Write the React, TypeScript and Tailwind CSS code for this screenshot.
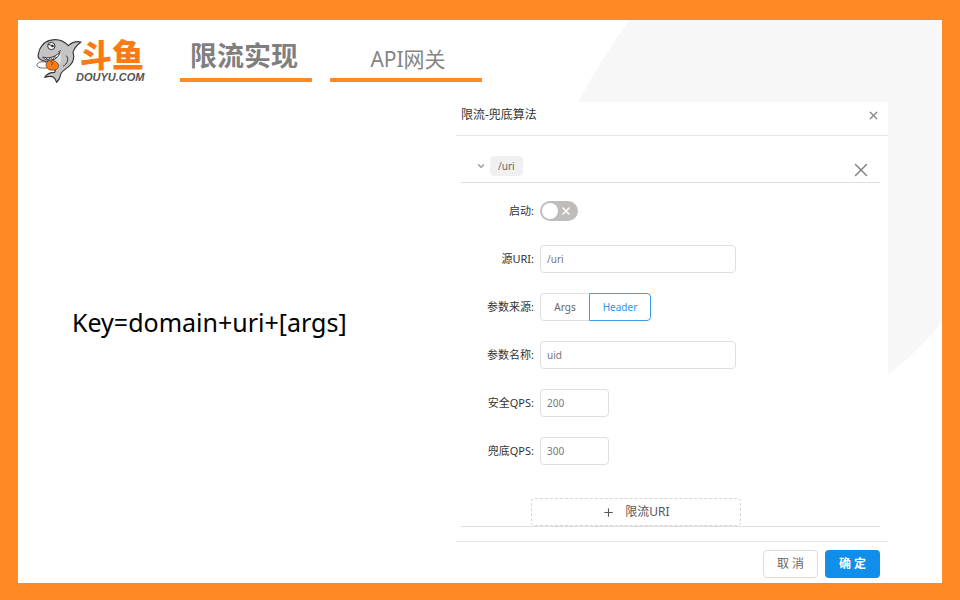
import { useState } from "react";
import type { ReactNode } from "react";
import { ChevronDown, Plus, X } from "lucide-react";

function Shark() {
  return (
    <svg viewBox="48 36 138 138" className="h-[46px] w-[46px] shrink-0" aria-hidden="true">
      <path
        d="M55 88C57 70 70 51 90 46C112 40 132 48 145 62C156 52 169 48 183 51C171 60 162 70 159 82C163 96 161 111 149 122C142 129 128 136 122 147C121 157 117 165 110 172C107 165 104 159 100 156C92 153 84 154 74 157C80 147 90 142 104 142C108 132 104 122 98 117L64 105C56 101 53 95 55 88Z"
        fill="#c4c4c6"
        stroke="#3b3637"
        strokeWidth="3.5"
        strokeLinejoin="round"
      />
      <path d="M84 104C100 104 113 99 121 84C126 98 125 114 108 132C99 128 88 118 84 104Z" fill="#dedede" />
      <path d="M68 96C82 101 102 99 119 82C118 94 104 107 86 106C77 105 71 101 68 96Z" fill="#fff" stroke="#332e2f" strokeWidth="3" />
      <path d="M78 99L84 105L91 99L98 104L104 95L111 98M115 80L123 77" fill="none" stroke="#332e2f" strokeWidth="2.5" />
      <circle cx="94" cy="63" r="11" fill="#f4f4f4" stroke="#3b3637" strokeWidth="3" />
      <circle cx="97" cy="63" r="3.5" fill="#2b2728" />
      <path d="M83 57L104 65" stroke="#3b3637" strokeWidth="3" />
      <path d="M80 112C66 107 48 113 51 122C54 130 74 131 87 127" fill="#fff" stroke="#4a4546" strokeWidth="2.5" />
      <path d="M82 110C88 103 98 104 106 109C117 114 119 127 110 133C101 138 85 136 81 128C77 123 77 116 82 110Z" fill="#fb7a14" stroke="#3b3637" strokeWidth="2" />
      <path d="M92 108L98 115L94 121" fill="none" stroke="#3b3637" strokeWidth="2.5" />
      <path d="M139 92C147 102 143 116 129 124" fill="none" stroke="#3b3637" strokeWidth="3" />
    </svg>
  );
}

function Logo() {
  return (
    <div className="flex h-[46px] w-[109px] items-start">
      <Shark />
      <div className="-ml-1.5 flex flex-col whitespace-nowrap">
        <span className="pl-1 font-['Noto_Sans_CJK_SC',sans-serif] text-[32px] leading-8 font-black text-[#fb7a14]">斗鱼</span>
        <span className="font-['Liberation_Sans',sans-serif] text-[11px] leading-4 font-bold text-[#555355] italic">DOUYU.COM</span>
      </div>
    </div>
  );
}

function Row({ label, htmlFor, children }: { label: string; htmlFor: string; children: ReactNode }) {
  return (
    <div className="flex h-7 items-center">
      <label htmlFor={htmlFor} className="w-[79px] shrink-0 pr-1.5 text-right text-[11px] text-[#333]">
        {label}:
      </label>
      {children}
    </div>
  );
}

const field = "h-7 rounded border border-[#dfdfdf] bg-white px-1.5 text-[10px] text-[#777] outline-none";

function LimitDialog() {
  const [source, setSource] = useState("Header");
  const [enabled, setEnabled] = useState(false);
  return (
    <section aria-label="限流-兜底算法" className="relative w-[432px] shrink-0 bg-white">
      <header className="flex h-[34px] items-center justify-between border-b border-[#e6e6e6] pr-[9px] pb-[7px] pl-[5px]">
        <h2 className="text-[12px] text-[#333]">限流-兜底算法</h2>
        <button type="button" aria-label="关闭" className="flex h-3 w-3 items-center justify-center text-[#85888e]">
          <X size={13} strokeWidth={2.5} className="shrink-0" />
        </button>
      </header>
      <div className="mr-2 ml-[5px]">
        <div className="flex h-[47px] items-end justify-between border-b border-[#dedede] pr-2">
          <div className="flex items-center gap-1 pb-1.5 pl-[15px]">
            <ChevronDown size={10} strokeWidth={3} className="text-[#999]" />
            <span className="flex h-5 items-center rounded bg-[#f0f0f0] px-2 text-[10px] text-[#666]">/uri</span>
          </div>
          <button type="button" aria-label="删除" className="pb-px text-[#85888e]">
            <X size={22} strokeWidth={1.75} />
          </button>
        </div>
        <form className="border-b border-[#dedede] pt-3.5" onSubmit={(e) => e.preventDefault()}>
          <div className="flex flex-col gap-5">
            <Row label="启动" htmlFor="enabled">
              <span className="relative h-5 w-[38px]">
                <input
                  id="enabled"
                  type="checkbox"
                  role="switch"
                  checked={enabled}
                  onChange={(e) => setEnabled(e.target.checked)}
                  className="peer h-5 w-[38px] appearance-none rounded-full bg-[#bfbcbc] checked:bg-[#108ee9]"
                />
                <span className="pointer-events-none absolute top-0.5 left-0.5 h-4 w-4 rounded-full bg-white peer-checked:left-5" />
                <X size={12} strokeWidth={3} className="pointer-events-none absolute top-1 right-1.5 text-white peer-checked:hidden" />
              </span>
            </Row>
            <Row label="源URI" htmlFor="uri">
              <input id="uri" defaultValue="/uri" className={`${field} w-[196px]`} />
            </Row>
            <Row label="参数来源" htmlFor="args">
              <button
                id="args"
                type="button"
                aria-pressed={source === "Args"}
                onClick={() => setSource("Args")}
                className="h-7 w-[50px] rounded-l border border-[#dfdfdf] text-[10px] text-[#666] aria-pressed:border-[#3d9de9] aria-pressed:text-[#2c95e8]"
              >
                Args
              </button>
              <button
                type="button"
                aria-pressed={source === "Header"}
                onClick={() => setSource("Header")}
                className="-ml-px h-7 w-[62px] rounded-r border border-[#dfdfdf] text-[10px] text-[#666] aria-pressed:border-[#3d9de9] aria-pressed:text-[#2c95e8]"
              >
                Header
              </button>
            </Row>
            <Row label="参数名称" htmlFor="name">
              <input id="name" defaultValue="uid" className={`${field} w-[196px]`} />
            </Row>
            <Row label="安全QPS" htmlFor="safe">
              <input id="safe" defaultValue="200" className={`${field} w-[69px]`} />
            </Row>
            <Row label="兜底QPS" htmlFor="bottom">
              <input id="bottom" defaultValue="300" className={`${field} w-[69px]`} />
            </Row>
          </div>
          <button
            type="button"
            className="mt-[33px] ml-[70px] flex h-7 w-[210px] items-center justify-center gap-2.5 rounded-sm border border-dashed border-[#d6d6d6] text-[12px] text-[#555]"
          >
            <Plus size={13} strokeWidth={2} />
            限流URI
          </button>
        </form>
      </div>
      <footer className="mt-3.5 flex justify-end gap-[7px] border-t border-[#e6e6e6] pt-2 pr-2 pb-[5px]">
        <button type="button" className="h-7 w-[55px] rounded border border-[#dcdcdc] bg-white text-[12px] text-[#666]">
          取 消
        </button>
        <button type="button" className="h-7 w-[55px] rounded bg-[#108ee9] text-[12px] font-bold text-white">
          确 定
        </button>
      </footer>
    </section>
  );
}

export default function App() {
  return (
    <div className="flex min-h-screen bg-[#ff8a25] px-[18px] pt-5 pb-[17px] font-['Noto_Sans','Noto_Sans_CJK_SC',sans-serif]">
      <main className="relative flex flex-1 flex-col bg-white">
        <svg viewBox="0 0 364 355" className="absolute top-0 right-0 h-[355px] w-[364px]" aria-hidden="true">
          <path d="M51 0Q24 38 0 82L310 355Q342 330 364 302V0Z" fill="#f7f7f7" />
        </svg>
        <header className="relative flex h-[82px] items-start pt-[17px] pl-[18px]">
          <Logo />
          <nav className="ml-[35px] flex gap-[18px]">
            <a href="#limit" className="flex h-[45px] w-[132px] items-start justify-center border-b-4 border-[#ff8a25] pr-1 text-[27px] leading-[38px] font-bold text-[#7f7f7f]">
              限流实现
            </a>
            <a href="#gateway" className="flex h-[45px] w-[152px] items-end justify-center border-b-4 border-[#ff8a25] pl-1 text-[21px] leading-[38px] text-[#858585]">
              API网关
            </a>
          </nav>
        </header>
        <div className="relative flex flex-1 pr-[54px]">
          <div className="flex flex-1 items-center pb-10 pl-[54px]">
            <p className="text-[25px] text-black">Key=domain+uri+[args]</p>
          </div>
          <LimitDialog />
        </div>
      </main>
    </div>
  );
}
